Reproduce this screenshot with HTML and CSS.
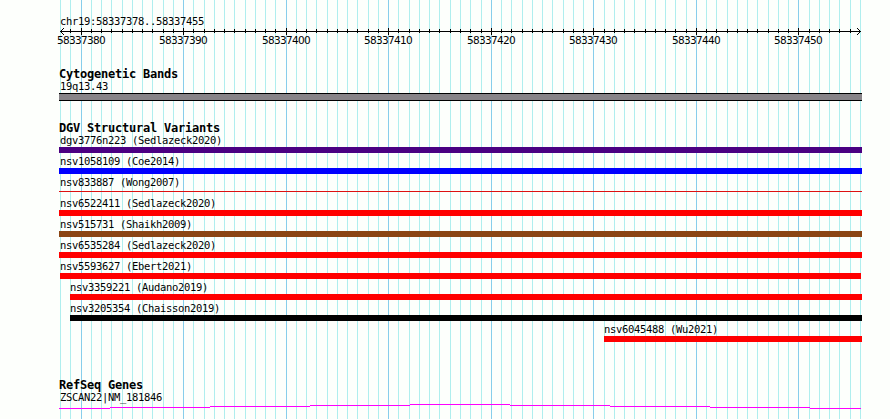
FILE: index.html
```html
<!DOCTYPE html>
<html lang="en">
<head>
<meta charset="utf-8">
<title>chr19:58337378..58337455</title>
<link rel="stylesheet" href="styles.css">
</head>
<body>
<svg class="grid" width="890" height="419" shape-rendering="crispEdges" aria-hidden="true"></svg>
<main class="browser">
  <header class="ruler">
    <div class="region">chr19:58337378..58337455</div>
    <svg class="scale" width="803" height="7" shape-rendering="crispEdges" aria-hidden="true"></svg>
    <div class="ticks">
      <span>58337380</span><span>58337390</span><span>58337400</span><span>58337410</span><span>58337420</span><span>58337430</span><span>58337440</span><span>58337450</span>
    </div>
  </header>
  <section class="track cyto">
    <h2>Cytogenetic Bands</h2>
    <div class="label">19q13.43</div>
    <div class="band"></div>
  </section>
  <section class="track variants">
    <h2>DGV Structural Variants</h2>
    <div class="feature first"><div class="label">dgv3776n223 (Sedlazeck2020)</div><div class="bar indigo"></div></div>
    <div class="feature"><div class="label">nsv1058109 (Coe2014)</div><div class="bar blue"></div></div>
    <div class="feature"><div class="label">nsv833887 (Wong2007)</div><div class="bar thin"></div></div>
    <div class="feature"><div class="label">nsv6522411 (Sedlazeck2020)</div><div class="bar red"></div></div>
    <div class="feature"><div class="label">nsv515731 (Shaikh2009)</div><div class="bar brown"></div></div>
    <div class="feature"><div class="label">nsv6535284 (Sedlazeck2020)</div><div class="bar red"></div></div>
    <div class="feature"><div class="label">nsv5593627 (Ebert2021)</div><div class="bar red inset"></div></div>
    <div class="feature from-379"><div class="label">nsv3359221 (Audano2019)</div><div class="bar red"></div></div>
    <div class="feature from-379"><div class="label">nsv3205354 (Chaisson2019)</div><div class="bar black"></div></div>
    <div class="feature from-431"><div class="label">nsv6045488 (Wu2021)</div><div class="bar red"></div></div>
  </section>
  <section class="track genes">
    <h2>RefSeq Genes</h2>
    <div class="label">ZSCAN22|NM_181846</div>
    <svg class="intron" width="803" height="5" shape-rendering="crispEdges" aria-hidden="true">
      <path d="M0 4h51v1H0zM51 3h100v1H51zM151 2h100v1H151zM251 1h100v1H251zM351 0h100v1H351zM451 1h100v1H451zM551 2h100v1H551zM651 3h100v1H651zM751 4h51v1H751z"/>
    </svg>
  </section>
</main>
<script src="grid.js"></script>
</body>
</html>
```
FILE: styles.css
```css
* { box-sizing: border-box; }

body {
  margin: 0;
  height: 419px;
  overflow: hidden;
  position: relative;
  background: #fdfffc;
  color: #000;
  font: 10.5px/12px "DejaVu Sans Mono", "Liberation Mono", monospace;
  letter-spacing: -0.32px;
  white-space: nowrap;
}

.grid { position: absolute; inset: 0; z-index: -1; }
.minor { fill: #afeeee; }
.major { fill: #87ceeb; }

.browser { width: 803px; margin-left: 59px; padding-top: 15px; }

.region { padding-left: 1px; height: 13px; }
.scale { display: block; }
.ticks {
  display: grid;
  grid-template-columns: 102px 103px 102px 103px 102px 103px 102px 48px;
  margin-left: -2px;
  height: 12px;
  line-height: 10px;
  font-family: "DejaVu Sans", sans-serif;
  letter-spacing: -0.68px;
}

.track h2 {
  margin: 0;
  font-size: 12px;
  line-height: 13px;
  height: 12px;
  letter-spacing: -0.22px;
}
.label { height: 15px; line-height: 17px; padding-left: 1px; }

.cyto { padding-top: 21px; }
.cyto .label { height: 13px; line-height: 12px; }
.band { height: 8px; background: #888488; border: solid #000; border-width: 1px 0; }

.variants { padding-top: 21px; }
.feature { height: 21px; }
.feature.first { height: 19px; }
.first .label { height: 13px; line-height: 12px; }
.bar { height: 6px; }
.thin { height: 1px; margin-top: 2px; background: #d11; }
.red { background: #f00; }
.blue { background: #00f; }
.indigo { background: #4b0082; }
.brown { background: #8b4513; }
.black { background: #000; }
.inset { margin: 0 1px; }
.from-379 { margin-left: 11px; }
.from-379 .label { padding-left: 0; }
.from-431 { margin-left: 545px; }
.from-431 .label { padding-left: 0; }

.genes { padding-top: 37px; }
.genes .label { height: 13px; line-height: 12px; }
.intron { display: block; fill: #f0f; }
```
FILE: grid.js
```js
const NS = "http://www.w3.org/2000/svg";
const grid = document.querySelector(".grid");
const scale = document.querySelector(".scale");

function rect(parent, x, y, width, height, className) {
  const el = document.createElementNS(NS, "rect");
  for (const [key, value] of Object.entries({ x, y, width, height, class: className })) {
    el.setAttribute(key, value);
  }
  parent.appendChild(el);
}

for (let i = 0; i <= 78; i++) {
  const x = Math.round((i * 800) / 78);
  const major = i % 10 === 2;
  rect(grid, 60 + x, 0, 1, 419, major ? "major" : "minor");
  if (i > 0 && i < 78) rect(scale, 1 + x, major ? 0 : 1, 1, major ? 7 : 4, "tick");
}
rect(scale, 1, 3, 801, 1, "axis");
for (let d = 1; d <= 3; d++) {
  rect(scale, 1 + d, 3 - d, 1, 1, "tick");
  rect(scale, 1 + d, 3 + d, 1, 1, "tick");
  rect(scale, 801 - d, 3 - d, 1, 1, "tick");
  rect(scale, 801 - d, 3 + d, 1, 1, "tick");
}
```
